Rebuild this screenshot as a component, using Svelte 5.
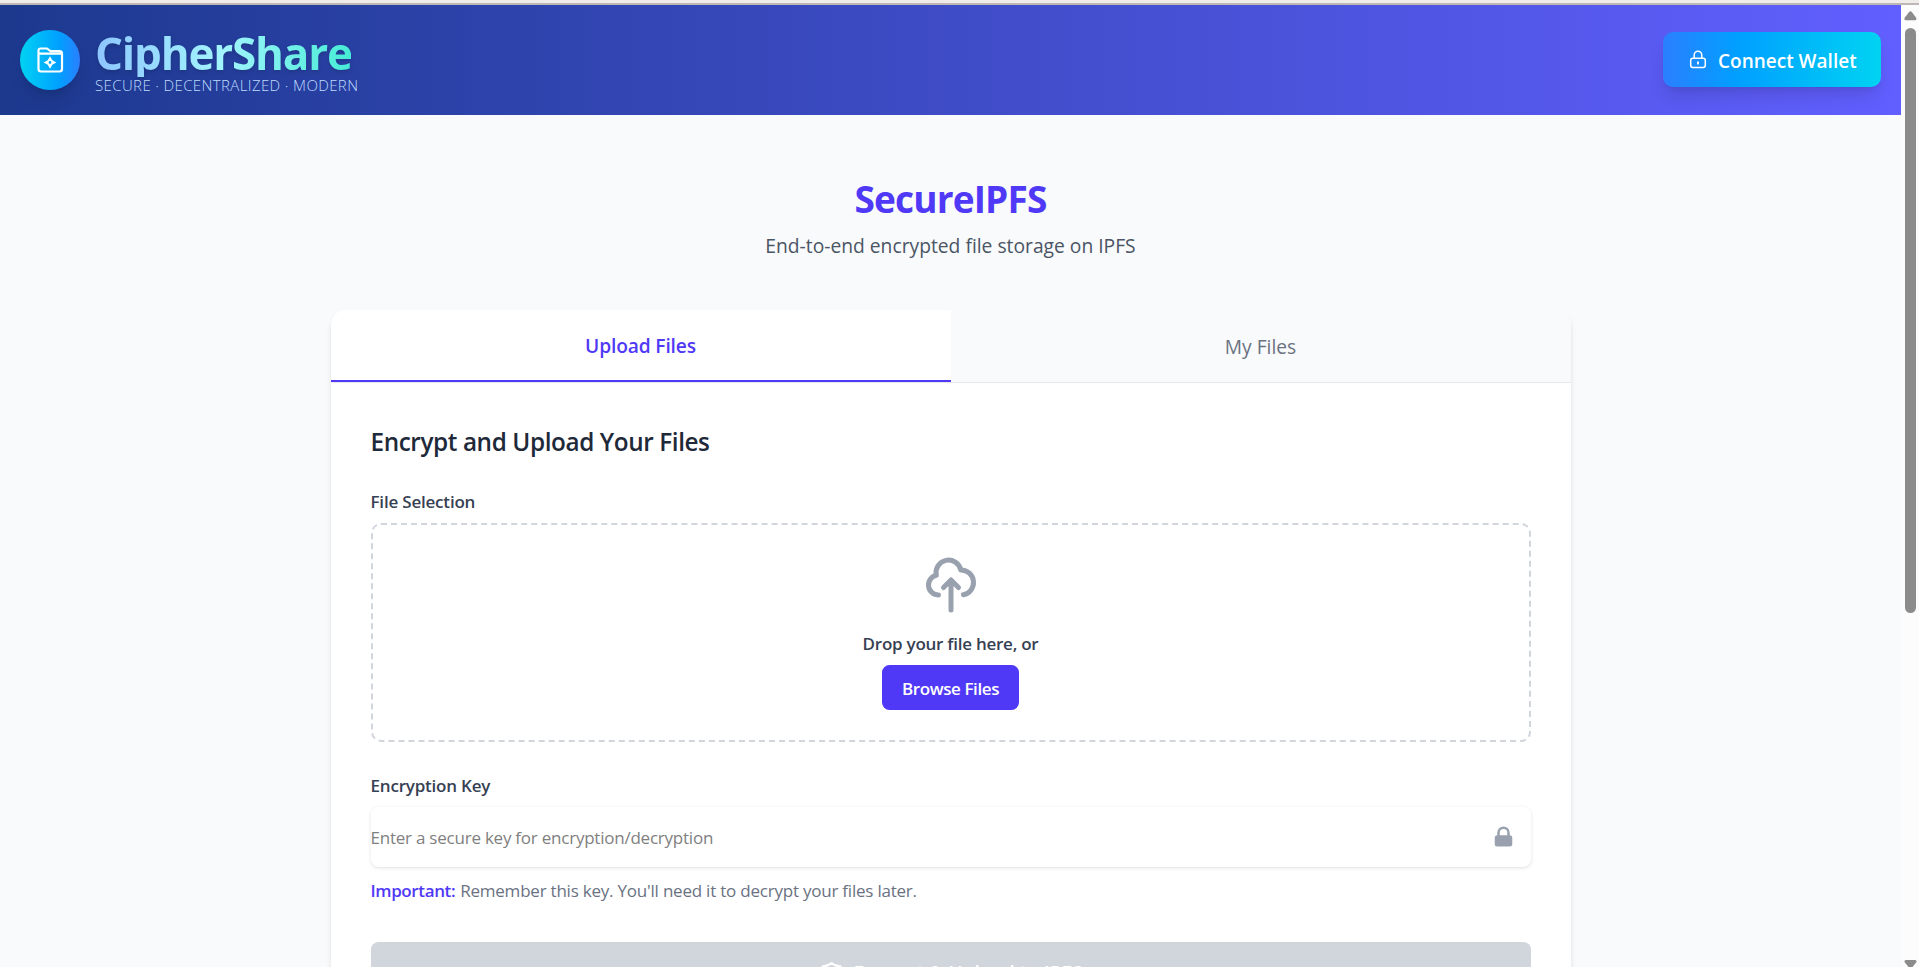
<script>
  const tabs = ['Upload Files', 'My Files'];
  let active = $state(0);
</script>

<div class="window">
  <div class="chrome"></div>
  <div class="body">
    <div class="page">
      <header>
        <div class="brand">
          <div class="logo">
            <svg width="30" height="30" viewBox="0 0 30 30" fill="none" stroke="#fff" stroke-width="2.200" stroke-linecap="round" stroke-linejoin="round">
              <path d="M3.500 8.500V5.500a2 2 0 0 1 2-2h6.500l3.500 2.700h9a2.500 2.500 0 0 1 2.500 2.500V24a2.500 2.500 0 0 1-2.500 2.500H6A2.500 2.500 0 0 1 3.500 24ZM3.500 8.700h23" />
              <path fill-rule="evenodd" d="M15 11.300l2.300 3.900 4.100 2.300-4.100 2.300-2.300 3.900-2.300-3.900-4.100-2.300 4.100-2.300ZM15 16.100a1.400 1.400 0 1 0 0 2.800 1.400 1.400 0 0 0 0-2.800Z" fill="#fff" stroke="none" />
            </svg>
          </div>
          <div class="names">
            <div class="name"><span>CipherShare</span></div>
            <div class="tagline"><span>SECURE · DECENTRALIZED · MODERN</span></div>
          </div>
        </div>
        <button class="connect">
          <svg width="20" height="20" viewBox="0 0 20 20" fill="none" stroke="#fff" stroke-width="1.500" stroke-linecap="round">
            <rect x="2.700" y="8.200" width="14.600" height="9.300" rx="2.200" />
            <path d="M6.200 8V5a3.800 3.800 0 0 1 7.600 0V8" />
            <path d="M10 12.200v1.500" stroke-width="1.800" />
          </svg>
          <span>Connect Wallet</span>
        </button>
      </header>

      <main>
        <h1><span>SecureIPFS</span></h1>
        <p class="sub"><span>End-to-end encrypted file storage on IPFS</span></p>

        <section class="card">
          <nav>
            {#each tabs as tab, i}
              <button class="tab" class:active={active === i} onclick={() => (active = i)}><span>{tab}</span></button>
            {/each}
          </nav>
          <div class="content">
            <h2><span>Encrypt and Upload Your Files</span></h2>
            <div class="label fs"><span>File Selection</span></div>
            <div class="drop">
              <svg width="60" height="60" viewBox="0 0 24 24" fill="none" stroke="#99a1af" stroke-width="2" stroke-linecap="round" stroke-linejoin="round">
                <path d="M7 16a4 4 0 01-.88-7.903A5 5 0 1115.900 6L16 6a5 5 0 011 9.900M15 13l-3-3m0 0l-3 3m3-3v12" />
              </svg>
              <p><span>Drop your file here, or</span></p>
              <button class="browse"><span>Browse Files</span></button>
            </div>
            <div class="label ek"><span>Encryption Key</span></div>
            <div class="field">
              <span>Enter a secure key for encryption/decryption</span>
              <svg width="25" height="25" viewBox="0 0 20 20" fill="#99a1af">
                <path fill-rule="evenodd" clip-rule="evenodd" d="M5 9V7a5 5 0 0110 0v2a2 2 0 012 2v5a2 2 0 01-2 2H5a2 2 0 01-2-2v-5a2 2 0 012-2zm8-2v2H7V7a3 3 0 016 0z" />
              </svg>
            </div>
            <p class="note"><strong>Important:</strong><span>Remember this key. You'll need it to decrypt your files later.</span></p>
            <button class="submit">
              <svg width="25" height="25" viewBox="0 0 24 24" fill="none" stroke="#fff" stroke-width="2" stroke-linecap="round" stroke-linejoin="round">
                <path d="M9 12l2 2 4-4m5.618-4.016A11.955 11.955 0 0112 2.944a11.955 11.955 0 01-8.618 3.040A12.020 12.020 0 003 9c0 5.591 3.824 10.290 9 11.622 5.176-1.332 9-6.030 9-11.622 0-1.042-.133-2.052-.382-3.016z" />
              </svg>
              <span>Encrypt &amp; Upload to IPFS</span>
            </button>
          </div>
        </section>
      </main>
    </div>
    <div class="scroll">
      <svg width="18" height="962" viewBox="0 0 18 962" fill="#8b8b8b">
        <path d="M8.300 6.800q1.200-1.200 2.300 0l4.500 6q1 2-1 2.500H4.700q-2-.5-1-2.500Z" />
        <rect x="4" y="23" width="11" height="585" rx="5.500" />
        <path d="M3.500 957q-.5-2 1.500-2h9q2 0 1.500 2l-4 5H7.500Z" />
      </svg>
    </div>
  </div>
</div>

<style>
  :global(body) { margin: 0; background: #f9fafb; }
  * { box-sizing: border-box; }
  .window { width: 1919px; height: 967px; overflow: hidden; display: flex; flex-direction: column; font-family: 'Open Sans', 'Noto Sans', sans-serif; }
  .chrome { height: 5px; flex: none; background: #f0ecea; border-bottom: 2px solid #bdb8b5; }
  .body { display: flex; height: 962px; }
  .page { width: 1901px; background: #f9fafb; overflow: hidden; }
  .scroll { width: 18px; background: #fcfcfc; }
  .scroll svg { display: block; }
  button { border: 0; padding: 0; margin: 0; font-family: inherit; background: none; }
  h1, h2, p { margin: 0; }
  span, strong { white-space: nowrap; }

  header { height: 110px; padding: 0 20px; display: flex; justify-content: space-between; align-items: center; background: linear-gradient(to right, #1c398e, #615fff); }
  .brand { display: flex; gap: 15px; align-items: center; }
  .logo { width: 60px; height: 60px; border-radius: 50%; display: grid; place-items: center; background: linear-gradient(to right, #00d3f2, #00a0ff 65%, #2b7fff); box-shadow: 0 12px 18px -4px rgba(0, 0, 0, .12), 0 5px 7px -5px rgba(0, 0, 0, .1); }
  .names { height: 70px; display: flex; flex-direction: column; }
  .name { height: 50px; padding-top: 4px; line-height: 48px; font-size: 44px; font-weight: 700; letter-spacing: -1.200px; }
  .name span { display: block; width: 256px; height: 48px; background: linear-gradient(to right, #8ec5ff, #a2f4fd 50%, #46ecd5); background-clip: text; -webkit-background-clip: text; color: transparent; filter: drop-shadow(0 2px 2px rgba(0, 0, 0, .15)); }
  .tagline { height: 20px; line-height: 20px; font-size: 15px; font-weight: 300; letter-spacing: .38px; color: #bedbff; }
  .connect { width: 218px; height: 55px; margin-bottom: 1px; border-radius: 10px; display: flex; align-items: center; padding-left: 25px; gap: 10px; color: #fff; font-size: 19px; font-weight: 600; background: linear-gradient(to right, #2b7fff, #00a0ff 35%, #00d3f2); box-shadow: 0 12px 18px -4px rgba(0, 0, 0, .13), 0 5px 7px -5px rgba(0, 0, 0, .1); }
  .connect span { padding-top: 3px; }

  main { width: 1240px; margin: 0 auto; padding-top: 60px; }
  h1 { height: 50px; line-height: 48px; text-align: center; font-size: 37px; font-weight: 700; letter-spacing: -.85px; color: #4f39f6; }
  .sub { margin-top: 6px; height: 30px; line-height: 30px; text-align: center; font-size: 19.250px; color: #4a5565; }
  .card { margin-top: 49px; background: #fff; border-radius: 15px; box-shadow: 0 5px 7px -1px rgba(0, 0, 0, .1), 0 2px 5px -2px rgba(0, 0, 0, .1); height: 800px; overflow: hidden; }
  nav { display: flex; height: 73px; border-bottom: 1px solid #e5e7eb; }
  .tab { flex: 1; height: 72px; font-size: 19.200px; color: #6a7282; background: #f9fafb; line-height: 72px; padding-top: 1px; }
  .tab.active { background: #fff; color: #4f39f6; border-bottom: 2px solid #4f39f6; font-weight: 600; line-height: 69px; letter-spacing: -.15px; }
  .content { padding: 40px; display: flex; flex-direction: column; }
  h2 { height: 40px; line-height: 38px; font-size: 24.300px; font-weight: 600; letter-spacing: -.4px; color: #1e2939; }
  .label { height: 25px; line-height: 25px; font-size: 17px; font-weight: 600; letter-spacing: -.2px; color: #364153; }
  .fs { margin-top: 26px; }
  .drop { margin-top: 9px; height: 219px; border: 2px dashed #d1d5dc; border-radius: 10px; display: flex; flex-direction: column; align-items: center; padding-top: 30px; }
  .drop svg { flex: none; }
  .drop p { margin-top: 16px; height: 25px; line-height: 25px; font-size: 17px; font-weight: 600; letter-spacing: -.25px; color: #364153; }
  .browse { margin-top: 9px; padding-top: 1px; width: 137px; height: 45px; border-radius: 7.500px; background: #4f39f6; color: #fff; font-size: 17px; font-weight: 600; letter-spacing: -.4px; }
  .ek { margin-top: 31px; }
  .field { margin-top: 9px; height: 60px; border-radius: 7.500px; display: flex; align-items: center; justify-content: space-between; padding-right: 15px; font-size: 17px; letter-spacing: -.23px; color: #808080; box-shadow: 0 1px 4px rgba(0, 0, 0, .1), 0 1px 2px -1px rgba(0, 0, 0, .1); }
  .field svg { margin-bottom: 1px; }
  .note { margin-top: 11px; height: 26px; line-height: 26px; font-size: 17px; letter-spacing: -.22px; color: #6a7282; display: flex; gap: 5px; }
  .note strong { font-weight: 600; letter-spacing: -.38px; color: #4f39f6; }
  .submit { margin-top: 38px; height: 60px; border-radius: 7.500px; background: #d1d5dc; color: #fff; font-size: 19.500px; font-weight: 600; letter-spacing: -.15px; display: flex; justify-content: center; align-items: center; gap: 10px; }
</style>
